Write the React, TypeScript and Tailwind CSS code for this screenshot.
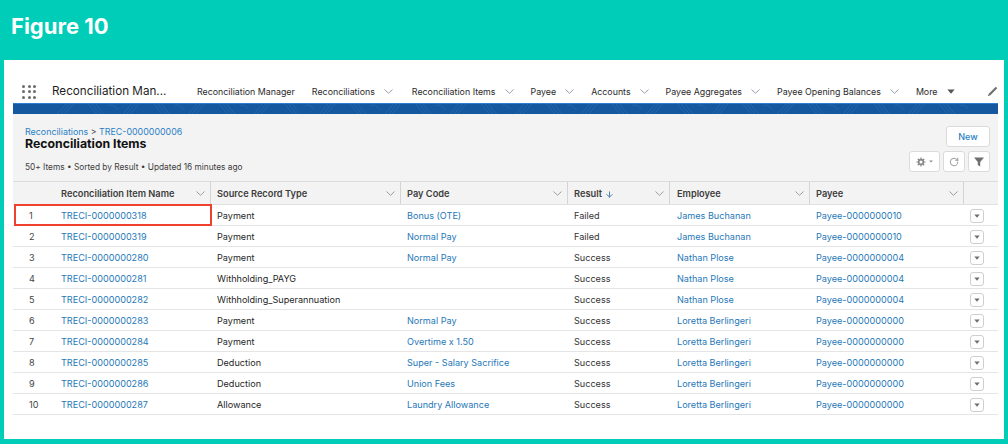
import { ArrowDown, RotateCw } from "lucide-react";

const NAV = [
  { label: "Reconciliation Manager", chevron: false, gap: "mr-[17px]" },
  { label: "Reconciliations", chevron: true, gap: "mr-[19px]" },
  { label: "Reconciliation Items", chevron: true, gap: "mr-[17px]" },
  { label: "Payee", chevron: true, gap: "mr-[17px]" },
  { label: "Accounts", chevron: true, gap: "mr-[17px]" },
  { label: "Payee Aggregates", chevron: true, gap: "mr-[17px]" },
  { label: "Payee Opening Balances", chevron: true, gap: "mr-[17px]" },
];

const COLS = "grid grid-cols-[48px_150px_190px_167px_102px_140px_154px_34px]";

const ROWS = [
  ["TRECI-0000000318", "Payment", "Bonus (OTE)", "Failed", "James Buchanan", "Payee-0000000010"],
  ["TRECI-0000000319", "Payment", "Normal Pay", "Failed", "James Buchanan", "Payee-0000000010"],
  ["TRECI-0000000280", "Payment", "Normal Pay", "Success", "Nathan Plose", "Payee-0000000004"],
  ["TRECI-0000000281", "Withholding_PAYG", "", "Success", "Nathan Plose", "Payee-0000000004"],
  ["TRECI-0000000282", "Withholding_Superannuation", "", "Success", "Nathan Plose", "Payee-0000000004"],
  ["TRECI-0000000283", "Payment", "Normal Pay", "Success", "Loretta Berlingeri", "Payee-0000000000"],
  ["TRECI-0000000284", "Payment", "Overtime x 1.50", "Success", "Loretta Berlingeri", "Payee-0000000000"],
  ["TRECI-0000000285", "Deduction", "Super - Salary Sacrifice", "Success", "Loretta Berlingeri", "Payee-0000000000"],
  ["TRECI-0000000286", "Deduction", "Union Fees", "Success", "Loretta Berlingeri", "Payee-0000000000"],
  ["TRECI-0000000287", "Allowance", "Laundry Allowance", "Success", "Loretta Berlingeri", "Payee-0000000000"],
];

function Caret({ className }: { className: string }) {
  return (
    <svg viewBox="0 0 10 6" className={className} fill="currentColor">
      <path d="M0.5 0.5h9L5 5.8z" />
    </svg>
  );
}

// wide, flat chevron used in the nav and the column headers
function Chevron({ className }: { className: string }) {
  return (
    <svg viewBox="0 0 9 5" className={className} fill="none" stroke="currentColor" strokeWidth="0.8">
      <path d="M0.5 0.5 4.5 4.3 8.5 0.5" />
    </svg>
  );
}

function HeaderCell({ label, sorted }: { label: string; sorted?: boolean }) {
  return (
    <div className="flex h-full items-center justify-between border-r border-[#d4d4d4] pr-[5px]">
      <span className="mt-[2px] flex items-center gap-[3px] font-semibold text-[#3e3e3c]">
        {label}
        {sorted && <ArrowDown size={9} strokeWidth={2.5} className="text-[#4a78b0]" />}
      </span>
      <Chevron className="mt-[1px] h-[5px] w-[9px] text-[#8a8886]" />
    </div>
  );
}

function Gear() {
  return (
    <svg viewBox="0 0 12 12" className="h-[10px] w-[10px] text-[#8a8886]" fill="none" stroke="currentColor">
      <circle cx="6" cy="6" r="2.8" strokeWidth="2" />
      <path d="M6 0.5v2.2M6 9.3v2.2M0.5 6h2.2M9.3 6h2.2M2.1 2.1l1.6 1.6M8.3 8.3l1.6 1.6M9.9 2.1 8.3 3.7M3.7 8.3 2.1 9.9" strokeWidth="1.4" />
    </svg>
  );
}

function BandPattern() {
  const arcs = [];
  for (let i = 0; i < 14; i++) {
    const x = i * 72;
    arcs.push(
      <path
        key={i}
        d={`M${x} 11 L${x + 9} 0 M${x + 4} 11 L${x + 13} 0 M${x + 8} 11 L${x + 17} 0 M${x + 34} 0 q4 6 9 11 M${x + 38} 0 q4 6 9 11 M${x + 42} 0 q4 6 9 11 M${x + 56} 2 q5 -3 10 4`}
      />
    );
  }
  return (
    <svg viewBox="0 0 985 11" className="h-full w-full" fill="none" stroke="#3f7cb8" strokeWidth="0.6" opacity="0.7">
      {arcs}
    </svg>
  );
}

export default function App() {
  return (
    <div className="flex h-[444px] w-[1008px] flex-col overflow-hidden bg-[#00cdb8] font-['Inter','Liberation_Sans',sans-serif]">
      <div className="flex h-[60px] shrink-0 items-start pl-[11px] pt-[12px] text-[22px] leading-[28px] font-bold text-white">
        Figure 10
      </div>

      <div className="mx-[4px] flex h-[379px] flex-col bg-white pl-[9px] pr-[6px]">
        {/* app nav */}
        <div className="mt-[20px] flex h-[23px] shrink-0 items-center text-[8.85px] text-[#2b2b2b]">
          <div className="ml-[9px] grid w-[15px] grid-cols-3 gap-x-[2px] gap-y-[2.5px]">
            {Array.from({ length: 9 }).map((_, i) => (
              <span key={i} className="h-[3px] w-[3px] rounded-full bg-[#6b6b6b]" />
            ))}
          </div>
          <span className="ml-[15px] w-[145px] text-[11.7px] text-[#1f1f1f]">Reconciliation Man...</span>
          {NAV.map((item) => (
            <span key={item.label} className={`flex items-center ${item.gap}`}>
              {item.label}
              {item.chevron && <Chevron className="ml-[9px] h-[5px] w-[9px] text-[#7a8694]" />}
            </span>
          ))}
          <span>More</span>
          <Caret className="ml-[9px] h-[5px] w-[8px] text-[#555]" />
          <svg viewBox="0 0 12 12" className="ml-auto h-[11px] w-[11px] text-[#706e6b]" fill="currentColor">
            <path d="M9.6 0.8 11.2 2.4 3.6 10 0.8 11.2 2 8.4z" />
          </svg>
        </div>

        {/* blue band */}
        <div className="h-[11px] shrink-0 border-t border-[#2c7fd0] bg-[#16589f]">
          <BandPattern />
        </div>

        {/* list header */}
        <div className="flex h-[68px] shrink-0 justify-between border-b border-[#dcdcdc] bg-[#f3f3f4] pl-[12px] pr-[8px]">
          <div className="pt-[12px]">
            <div className="text-[8.9px] leading-[11px] text-[#2a7fc4]">
              Reconciliations <span className="text-[#444]">&gt;</span> TREC-0000000006
            </div>
            <div className="text-[12.3px] leading-[13px] font-bold text-[#111]">Reconciliation Items</div>
            <div className="mt-[12px] text-[8.3px] leading-[10px] text-[#3e3e3c]">
              50+ Items • Sorted by Result • Updated 16 minutes ago
            </div>
          </div>
          <div className="flex flex-col items-end gap-[4px] pt-[12px]">
            <button className="h-[21px] w-[44px] rounded-[3px] border border-[#dddbda] bg-white text-[9px] font-medium text-[#2a7fc4]">
              New
            </button>
            <div className="flex gap-[3px]">
              <div className="flex h-[21px] w-[31px] items-center justify-center gap-[3px] rounded-[3px] border border-[#dddbda] bg-white">
                <Gear />
                <Caret className="h-[3px] w-[4px] text-[#8a8886]" />
              </div>
              <div className="flex h-[21px] w-[22px] items-center justify-center rounded-[3px] border border-[#dddbda] bg-white">
                <RotateCw size={10} className="text-[#8a8886]" />
              </div>
              <div className="flex h-[21px] w-[22px] items-center justify-center rounded-[3px] border border-[#dddbda] bg-white">
                <svg viewBox="0 0 10 10" className="h-[10px] w-[10px] text-[#6f6f6f]" fill="currentColor">
                  <path d="M0 0.5h10L6.2 5v4.5L3.8 8V5z" />
                </svg>
              </div>
            </div>
          </div>
        </div>

        {/* table */}
        <div className="relative text-[9.1px] text-[#1f1f1f]">
          <div className={`${COLS} h-[23px] items-stretch border-b border-[#e0e0e0] bg-[#f3f3f4] text-[9.25px]`}>
            <div />
            <HeaderCell label="Reconciliation Item Name" />
            <div className="pl-[6px]"><HeaderCell label="Source Record Type" /></div>
            <div className="pl-[6px]"><HeaderCell label="Pay Code" /></div>
            <div className="pl-[6px]"><HeaderCell label="Result" sorted /></div>
            <div className="pl-[7px]"><HeaderCell label="Employee" /></div>
            <div className="pl-[6px]"><HeaderCell label="Payee" /></div>
            <div />
          </div>

          {ROWS.map((row, i) => (
            <div key={row[0]} className={`${COLS} h-[21px] items-center border-b border-[#e5e5e5] pt-[2px]`}>
              <span className="pl-[16px] text-[#444]">{i + 1}</span>
              <span className="text-[#1f78b8]">{row[0]}</span>
              <span className="pl-[6px]">{row[1]}</span>
              <span className="pl-[6px] text-[#1f78b8]">{row[2]}</span>
              <span className="pl-[6px] text-[#333]">{row[3]}</span>
              <span className="pl-[7px] text-[#1f78b8]">{row[4]}</span>
              <span className="pl-[6px] text-[#1f78b8]">{row[5]}</span>
              <span className="flex pl-[6px]">
                <span className="flex h-[14px] w-[14px] items-center justify-center rounded-[3px] border border-[#cfcfcf] bg-white">
                  <Caret className="h-[4px] w-[6px] text-[#706e6b]" />
                </span>
              </span>
            </div>
          ))}

          {/* red highlight */}
          <div className="absolute left-[1px] top-[22px] h-[22px] w-[198px] border-2 border-[#f0402f]" />
        </div>
      </div>
    </div>
  );
}
